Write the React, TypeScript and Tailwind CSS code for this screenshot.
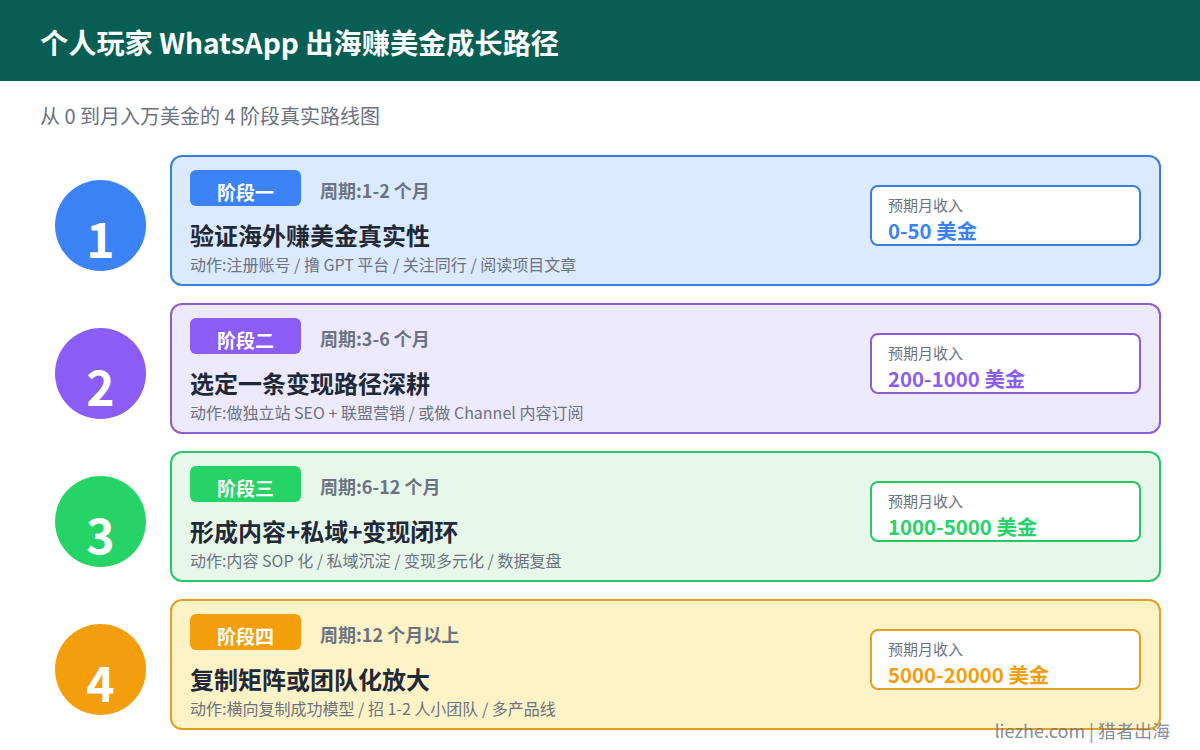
const font = "font-['Noto_Sans_CJK_SC','Noto_Sans',sans-serif]";

const stages = [
  {
    num: "1",
    tag: "阶段一",
    period: "周期:1-2 个月",
    title: "验证海外赚美金真实性",
    action: "动作:注册账号 / 撸 GPT 平台 / 关注同行 / 阅读项目文章",
    income: "0-50 美金",
    circle: "bg-[#3b82f6]",
    card: "bg-[#dbeafe] border-[#3b7ddd]",
    box: "border-[#3b7ddd]",
    text: "text-[#3b82f6]",
  },
  {
    num: "2",
    tag: "阶段二",
    period: "周期:3-6 个月",
    title: "选定一条变现路径深耕",
    action: "动作:做独立站 SEO + 联盟营销 / 或做 Channel 内容订阅",
    income: "200-1000 美金",
    circle: "bg-[#8b5cf6]",
    card: "bg-[#ede9fe] border-[#8b5cd6]",
    box: "border-[#8b5cd6]",
    text: "text-[#8b5cf6]",
  },
  {
    num: "3",
    tag: "阶段三",
    period: "周期:6-12 个月",
    title: "形成内容+私域+变现闭环",
    action: "动作:内容 SOP 化 / 私域沉淀 / 变现多元化 / 数据复盘",
    income: "1000-5000 美金",
    circle: "bg-[#25d366]",
    card: "bg-[#e7f8ea] border-[#25c766]",
    box: "border-[#25c766]",
    text: "text-[#25d366]",
  },
  {
    num: "4",
    tag: "阶段四",
    period: "周期:12 个月以上",
    title: "复制矩阵或团队化放大",
    action: "动作:横向复制成功模型 / 招 1-2 人小团队 / 多产品线",
    income: "5000-20000 美金",
    circle: "bg-[#f59e0b]",
    card: "bg-[#fef3c7] border-[#e5a021]",
    box: "border-[#e5a021]",
    text: "text-[#f59e0b]",
  },
];

export default function App() {
  return (
    <div className={`relative h-[750px] w-[1200px] overflow-hidden bg-white ${font}`}>
      <header className="flex h-[81px] items-center bg-[#075e54] pl-10 pt-1">
        <h1 className="text-[28.2px] font-bold leading-none text-white">个人玩家 WhatsApp 出海赚美金成长路径</h1>
      </header>
      <p className="mt-[21px] pl-10 text-[20px] leading-[28px] text-[#6b7280]">从 0 到月入万美金的 4 阶段真实路线图</p>
      <div className="mt-[25px] flex flex-col gap-[17px] pl-[55px] pr-[39px]">
        {stages.map((s) => (
          <div key={s.num} className="flex items-center gap-[24px]">
            <div className={`mt-[10px] flex h-[91px] w-[91px] shrink-0 items-center justify-center rounded-full pt-[22px] text-[48px] font-bold leading-none text-white ${s.circle}`}>
              {s.num}
            </div>
            <div className={`flex h-[131px] flex-1 items-center justify-between rounded-[12px] border-2 pl-[18px] pr-[18px] ${s.card}`}>
              <div className="mt-[5px] flex flex-col">
                <div className="flex items-center gap-[19px]">
                  <span className={`flex h-[36px] w-[111px] items-center justify-center rounded-[6px] pt-[8px] text-[19px] font-bold leading-[28px] text-white ${s.circle}`}>{s.tag}</span>
                  <span className="pt-[4px] text-[18px] font-bold text-[#6b7280]">{s.period}</span>
                </div>
                <div className="mt-[11px] text-[24px] font-bold leading-[36px] text-[#1f2937]">{s.title}</div>
                <div className="-mt-[1px] text-[16px] leading-[24px] text-[#6b7280]">{s.action}</div>
              </div>
              <div className={`-mt-[10px] flex h-[61px] w-[271px] flex-col rounded-[8px] border-2 bg-white pl-[16px] pt-[8px] ${s.box}`}>
                <div className="text-[15px] leading-[20px] text-[#6b7280]">预期月收入</div>
                <div className={`mt-[2px] text-[20.4px] font-bold leading-[26px] ${s.text}`}>{s.income}</div>
              </div>
            </div>
          </div>
        ))}
      </div>
      <div className="absolute bottom-[7px] right-[30px] text-[18px] leading-[26px] text-[#6b7280] opacity-80">liezhe.com | 猎者出海</div>
    </div>
  );
}
